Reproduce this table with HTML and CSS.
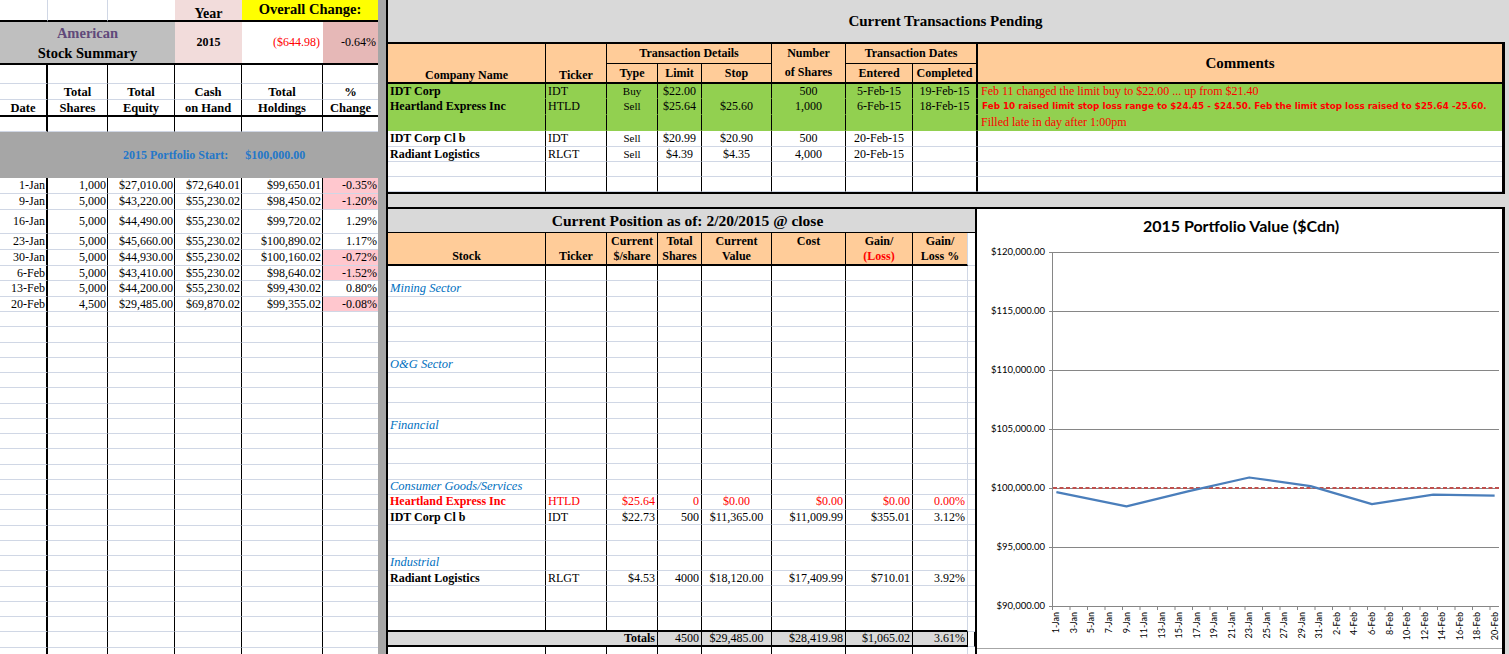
FILE: index.html
```html
<!DOCTYPE html>
<html>
<head>
<meta charset="utf-8">
<title>Stock Summary</title>
<link rel="stylesheet" href="styles.css">
</head>
<body>
<div class="sheet">
  <section class="summary">
    <table class="sum">
      <colgroup><col class="w48"><col class="w60"><col class="w67"><col class="w67"><col class="w81"><col class="w55"></colgroup>
      <tr class="r1"><td class="gl"></td><td class="gl"></td><td></td><td class="year">Year</td><td class="overall" colspan="2">Overall Change:</td></tr>
      <tr class="r2"><td class="stitle" colspan="3"><div class="amer">American</div><div class="ss">Stock Summary</div></td><td class="yr">2015</td><td class="chg">($644.98)</td><td class="chgp">-0.64%</td></tr>
      <tr class="b r3"><td class="v1"></td><td class="v2"></td><td class="v2"></td><td class="v2"></td><td class="v2"></td><td></td></tr>
      <tr class="b r4 hd"><td class="v1"></td><td class="v2">Total</td><td class="v2">Total</td><td class="v2">Cash</td><td class="v2">Total</td><td>%</td></tr>
      <tr class="b r5 hd thick"><td class="v1">Date</td><td class="v2">Shares</td><td class="v2">Equity</td><td class="v2">on Hand</td><td class="v2">Holdings</td><td>Change</td></tr>
      <tr class="b r6"><td class="v1"></td><td class="v2"></td><td class="v2"></td><td class="v2"></td><td class="v2"></td><td></td></tr>
      <tr class="r7"><td class="start" colspan="6"><span class="st1">2015 Portfolio Start:</span><span>$100,000.00</span></td></tr>
      <tr class="b dt h16"><td class="v1">1-Jan</td><td class="v2">1,000</td><td class="v2">$27,010.00</td><td class="v2">$72,640.01</td><td class="v2">$99,650.01</td><td class="neg">-0.35%</td></tr>
      <tr class="b dt h16"><td class="v1">9-Jan</td><td class="v2">5,000</td><td class="v2">$43,220.00</td><td class="v2">$55,230.02</td><td class="v2">$98,450.02</td><td class="neg">-1.20%</td></tr>
      <tr class="b dt h24"><td class="v1">16-Jan</td><td class="v2">5,000</td><td class="v2">$44,490.00</td><td class="v2">$55,230.02</td><td class="v2">$99,720.02</td><td>1.29%</td></tr>
      <tr class="b dt h16"><td class="v1">23-Jan</td><td class="v2">5,000</td><td class="v2">$45,660.00</td><td class="v2">$55,230.02</td><td class="v2">$100,890.02</td><td>1.17%</td></tr>
      <tr class="b dt h16"><td class="v1">30-Jan</td><td class="v2">5,000</td><td class="v2">$44,930.00</td><td class="v2">$55,230.02</td><td class="v2">$100,160.02</td><td class="neg">-0.72%</td></tr>
      <tr class="b dt h15"><td class="v1">6-Feb</td><td class="v2">5,000</td><td class="v2">$43,410.00</td><td class="v2">$55,230.02</td><td class="v2">$98,640.02</td><td class="neg">-1.52%</td></tr>
      <tr class="b dt h16"><td class="v1">13-Feb</td><td class="v2">5,000</td><td class="v2">$44,200.00</td><td class="v2">$55,230.02</td><td class="v2">$99,430.02</td><td>0.80%</td></tr>
      <tr class="b dt h15"><td class="v1">20-Feb</td><td class="v2">4,500</td><td class="v2">$29,485.00</td><td class="v2">$69,870.02</td><td class="v2">$99,355.02</td><td class="neg">-0.08%</td></tr>
      <tr class="b e"><td class="v1"></td><td class="v2"></td><td class="v2"></td><td class="v2"></td><td class="v2"></td><td></td></tr>
      <tr class="b e"><td class="v1"></td><td class="v2"></td><td class="v2"></td><td class="v2"></td><td class="v2"></td><td></td></tr>
      <tr class="b e"><td class="v1"></td><td class="v2"></td><td class="v2"></td><td class="v2"></td><td class="v2"></td><td></td></tr>
      <tr class="b e"><td class="v1"></td><td class="v2"></td><td class="v2"></td><td class="v2"></td><td class="v2"></td><td></td></tr>
      <tr class="b e"><td class="v1"></td><td class="v2"></td><td class="v2"></td><td class="v2"></td><td class="v2"></td><td></td></tr>
      <tr class="b e"><td class="v1"></td><td class="v2"></td><td class="v2"></td><td class="v2"></td><td class="v2"></td><td></td></tr>
      <tr class="b e"><td class="v1"></td><td class="v2"></td><td class="v2"></td><td class="v2"></td><td class="v2"></td><td></td></tr>
      <tr class="b e"><td class="v1"></td><td class="v2"></td><td class="v2"></td><td class="v2"></td><td class="v2"></td><td></td></tr>
      <tr class="b e"><td class="v1"></td><td class="v2"></td><td class="v2"></td><td class="v2"></td><td class="v2"></td><td></td></tr>
      <tr class="b e"><td class="v1"></td><td class="v2"></td><td class="v2"></td><td class="v2"></td><td class="v2"></td><td></td></tr>
      <tr class="b e"><td class="v1"></td><td class="v2"></td><td class="v2"></td><td class="v2"></td><td class="v2"></td><td></td></tr>
      <tr class="b e"><td class="v1"></td><td class="v2"></td><td class="v2"></td><td class="v2"></td><td class="v2"></td><td></td></tr>
      <tr class="b e"><td class="v1"></td><td class="v2"></td><td class="v2"></td><td class="v2"></td><td class="v2"></td><td></td></tr>
      <tr class="b e"><td class="v1"></td><td class="v2"></td><td class="v2"></td><td class="v2"></td><td class="v2"></td><td></td></tr>
      <tr class="b e"><td class="v1"></td><td class="v2"></td><td class="v2"></td><td class="v2"></td><td class="v2"></td><td></td></tr>
      <tr class="b e"><td class="v1"></td><td class="v2"></td><td class="v2"></td><td class="v2"></td><td class="v2"></td><td></td></tr>
      <tr class="b e"><td class="v1"></td><td class="v2"></td><td class="v2"></td><td class="v2"></td><td class="v2"></td><td></td></tr>
      <tr class="b e"><td class="v1"></td><td class="v2"></td><td class="v2"></td><td class="v2"></td><td class="v2"></td><td></td></tr>
      <tr class="b e"><td class="v1"></td><td class="v2"></td><td class="v2"></td><td class="v2"></td><td class="v2"></td><td></td></tr>
      <tr class="b e"><td class="v1"></td><td class="v2"></td><td class="v2"></td><td class="v2"></td><td class="v2"></td><td></td></tr>
      <tr class="b e"><td class="v1"></td><td class="v2"></td><td class="v2"></td><td class="v2"></td><td class="v2"></td><td></td></tr>
      <tr class="b e"><td class="v1"></td><td class="v2"></td><td class="v2"></td><td class="v2"></td><td class="v2"></td><td></td></tr>
      <tr class="b e"><td class="v1"></td><td class="v2"></td><td class="v2"></td><td class="v2"></td><td class="v2"></td><td></td></tr>
    </table>
  </section>
  <div class="divider"></div>
  <div class="main">
    <div class="ptitle">Current Transactions Pending</div>
    <div class="pend-wrap">
      <table class="pend">
        <colgroup><col class="w158"><col class="w61"><col class="w51"><col class="w44"><col class="w70"><col class="w74"><col class="w67"><col class="w64"><col class="w525"></colgroup>
        <tr class="ha">
          <td rowspan="2" class="hbot">Company Name</td>
          <td rowspan="2" class="hbot">Ticker</td>
          <td colspan="3" class="sub">Transaction Details</td>
          <td rowspan="2" class="hnum">Number<br>of Shares</td>
          <td colspan="2" class="sub">Transaction Dates</td>
          <td rowspan="2" class="c hcmt">Comments</td>
        </tr>
        <tr class="hb"><td>Type</td><td>Limit</td><td>Stop</td><td>Entered</td><td>Completed</td></tr>
        <tr class="gr h15"><td class="co">IDT Corp</td><td>IDT</td><td class="ty">Buy</td><td class="ce">$22.00</td><td class="ce"></td><td class="ce">500</td><td class="ce">5-Feb-15</td><td class="ce">19-Feb-15</td><td class="c cm1">Feb 11 changed the limit buy to $22.00 ... up from $21.40</td></tr>
        <tr class="gr h16"><td class="co">Heartland Express Inc</td><td>HTLD</td><td class="ty">Sell</td><td class="ce">$25.64</td><td class="ce">$25.60</td><td class="ce">1,000</td><td class="ce">6-Feb-15</td><td class="ce">18-Feb-15</td><td class="c cm2">Feb 10 raised limit stop loss range to $24.45 - $24.50. Feb the limit stop loss raised to $25.64 -25.60.</td></tr>
        <tr class="gr h16"><td></td><td></td><td></td><td></td><td></td><td></td><td></td><td></td><td class="c cm1">Filled late in day after 1:00pm</td></tr>
        <tr class="h16"><td class="co">IDT Corp Cl b</td><td>IDT</td><td class="ty">Sell</td><td class="ce">$20.99</td><td class="ce">$20.90</td><td class="ce">500</td><td class="ce">20-Feb-15</td><td></td><td class="c"></td></tr>
        <tr class="h15"><td class="co">Radiant Logistics</td><td>RLGT</td><td class="ty">Sell</td><td class="ce">$4.39</td><td class="ce">$4.35</td><td class="ce">4,000</td><td class="ce">20-Feb-15</td><td></td><td class="c"></td></tr>
        <tr class="h15"><td></td><td></td><td></td><td></td><td></td><td></td><td></td><td></td><td class="c"></td></tr>
        <tr class="h15"><td></td><td></td><td></td><td></td><td></td><td></td><td></td><td></td><td class="c"></td></tr>
      </table>
    </div>
    <div class="strip"></div>
    <div class="lower">
      <div class="pos-wrap">
        <table class="pos">
          <colgroup><col class="w158"><col class="w61"><col class="w51"><col class="w44"><col class="w70"><col class="w74"><col class="w67"><col class="w55"><col class="w7"></colgroup>
          <tr class="pt"><td colspan="9">Current Position as of: 2/20/2015 @ close</td></tr>
          <tr class="ph"><td>Stock</td><td>Ticker</td><td>Current<br>$/share</td><td>Total<br>Shares</td><td>Current<br>Value</td><td class="htop">Cost</td><td>Gain/<br><span class="red">(Loss)</span></td><td>Gain/<br>Loss %</td><td class="blank"></td></tr>
          <tr><td></td><td></td><td></td><td></td><td></td><td></td><td></td><td></td><td></td></tr>
          <tr><td class="sec">Mining Sector</td><td></td><td></td><td></td><td></td><td></td><td></td><td></td><td></td></tr>
          <tr><td></td><td></td><td></td><td></td><td></td><td></td><td></td><td></td><td></td></tr>
          <tr><td></td><td></td><td></td><td></td><td></td><td></td><td></td><td></td><td></td></tr>
          <tr><td></td><td></td><td></td><td></td><td></td><td></td><td></td><td></td><td></td></tr>
          <tr><td></td><td></td><td></td><td></td><td></td><td></td><td></td><td></td><td></td></tr>
          <tr><td class="sec">O&amp;G Sector</td><td></td><td></td><td></td><td></td><td></td><td></td><td></td><td></td></tr>
          <tr><td></td><td></td><td></td><td></td><td></td><td></td><td></td><td></td><td></td></tr>
          <tr><td></td><td></td><td></td><td></td><td></td><td></td><td></td><td></td><td></td></tr>
          <tr><td></td><td></td><td></td><td></td><td></td><td></td><td></td><td></td><td></td></tr>
          <tr><td class="sec">Financial</td><td></td><td></td><td></td><td></td><td></td><td></td><td></td><td></td></tr>
          <tr><td></td><td></td><td></td><td></td><td></td><td></td><td></td><td></td><td></td></tr>
          <tr><td></td><td></td><td></td><td></td><td></td><td></td><td></td><td></td><td></td></tr>
          <tr><td></td><td></td><td></td><td></td><td></td><td></td><td></td><td></td><td></td></tr>
          <tr><td class="sec">Consumer Goods/Services</td><td></td><td></td><td></td><td></td><td></td><td></td><td></td><td></td></tr>
          <tr class="redrow"><td class="co">Heartland Express Inc</td><td>HTLD</td><td class="r">$25.64</td><td class="r">0</td><td class="ce">$0.00</td><td class="r">$0.00</td><td class="r">$0.00</td><td class="r">0.00%</td><td></td></tr>
          <tr><td class="co">IDT Corp Cl b</td><td>IDT</td><td class="r">$22.73</td><td class="r">500</td><td class="ce">$11,365.00</td><td class="r">$11,009.99</td><td class="r">$355.01</td><td class="r">3.12%</td><td></td></tr>
          <tr><td></td><td></td><td></td><td></td><td></td><td></td><td></td><td></td><td></td></tr>
          <tr><td></td><td></td><td></td><td></td><td></td><td></td><td></td><td></td><td></td></tr>
          <tr><td class="sec">Industrial</td><td></td><td></td><td></td><td></td><td></td><td></td><td></td><td></td></tr>
          <tr><td class="co">Radiant Logistics</td><td>RLGT</td><td class="r">$4.53</td><td class="r">4000</td><td class="ce">$18,120.00</td><td class="r">$17,409.99</td><td class="r">$710.01</td><td class="r">3.92%</td><td></td></tr>
          <tr><td></td><td></td><td></td><td></td><td></td><td></td><td></td><td></td><td></td></tr>
          <tr><td></td><td></td><td></td><td></td><td></td><td></td><td></td><td></td><td></td></tr>
          <tr class="pre"><td></td><td></td><td></td><td></td><td></td><td></td><td></td><td></td><td></td></tr>
          <tr class="tot"><td colspan="3" class="r tl">Totals</td><td class="r">4500</td><td class="ce">$29,485.00</td><td class="r">$28,419.98</td><td class="r">$1,065.02</td><td class="r">3.61%</td><td class="blank"></td></tr>
          <tr><td></td><td></td><td></td><td></td><td></td><td></td><td></td><td></td><td></td></tr>
        </table>
      </div>
      <div class="chart">
        <svg class="chart-svg" width="525" height="439" viewBox="0 0 525 439">
          <text class="ct" x="264" y="23" text-anchor="middle">2015 Portfolio Value ($Cdn)</text>
          <g class="grid">
            <path d="M72 43.5H522M72 102.5H522M72 161.5H522M72 220.5H522M72 279.5H522M72 338.5H522M72 397.5H522M75.5 43V401"/>
            <path d="M75.5 397v4M93 397v4M110.5 397v4M128 397v4M145.5 397v4M163 397v4M180.5 397v4M198 397v4M215.5 397v4M233 397v4M250.5 397v4M268 397v4M285.5 397v4M303 397v4M320.5 397v4M338 397v4M355.5 397v4M373 397v4M390.5 397v4M408 397v4M425.5 397v4M443 397v4M460.5 397v4M478 397v4M495.5 397v4M513 397v4"/>
          </g>
          <g class="yl">
            <text x="68" y="46">$120,000.00</text>
            <text x="68" y="105">$115,000.00</text>
            <text x="68" y="164">$110,000.00</text>
            <text x="68" y="223">$105,000.00</text>
            <text x="68" y="282">$100,000.00</text>
            <text x="68" y="341">$95,000.00</text>
            <text x="68" y="400">$90,000.00</text>
          </g>
          <line class="base" x1="76" y1="279" x2="522" y2="279"/>
          <polyline class="val" points="79.38,283.13 149.5,297.29 210.86,282.3 272.21,268.5 333.57,277.11 394.92,295.05 456.28,285.73 517.63,286.61"/>
          <g class="xl">
            <text transform="translate(79.4 403) rotate(-90)" dy="3">1-Jan</text>
            <text transform="translate(96.9 403) rotate(-90)" dy="3">3-Jan</text>
            <text transform="translate(114.4 403) rotate(-90)" dy="3">5-Jan</text>
            <text transform="translate(132 403) rotate(-90)" dy="3">7-Jan</text>
            <text transform="translate(149.5 403) rotate(-90)" dy="3">9-Jan</text>
            <text transform="translate(167 403) rotate(-90)" dy="3">11-Jan</text>
            <text transform="translate(184.6 403) rotate(-90)" dy="3">13-Jan</text>
            <text transform="translate(202.1 403) rotate(-90)" dy="3">15-Jan</text>
            <text transform="translate(219.6 403) rotate(-90)" dy="3">17-Jan</text>
            <text transform="translate(237.2 403) rotate(-90)" dy="3">19-Jan</text>
            <text transform="translate(254.7 403) rotate(-90)" dy="3">21-Jan</text>
            <text transform="translate(272.2 403) rotate(-90)" dy="3">23-Jan</text>
            <text transform="translate(289.7 403) rotate(-90)" dy="3">25-Jan</text>
            <text transform="translate(307.3 403) rotate(-90)" dy="3">27-Jan</text>
            <text transform="translate(324.8 403) rotate(-90)" dy="3">29-Jan</text>
            <text transform="translate(342.3 403) rotate(-90)" dy="3">31-Jan</text>
            <text transform="translate(359.9 403) rotate(-90)" dy="3">2-Feb</text>
            <text transform="translate(377.4 403) rotate(-90)" dy="3">4-Feb</text>
            <text transform="translate(394.9 403) rotate(-90)" dy="3">6-Feb</text>
            <text transform="translate(412.5 403) rotate(-90)" dy="3">8-Feb</text>
            <text transform="translate(430 403) rotate(-90)" dy="3">10-Feb</text>
            <text transform="translate(447.5 403) rotate(-90)" dy="3">12-Feb</text>
            <text transform="translate(465 403) rotate(-90)" dy="3">14-Feb</text>
            <text transform="translate(482.6 403) rotate(-90)" dy="3">16-Feb</text>
            <text transform="translate(500.1 403) rotate(-90)" dy="3">18-Feb</text>
            <text transform="translate(517.6 403) rotate(-90)" dy="3">20-Feb</text>
          </g>
        </svg>
      </div>
    </div>
  </div>
</div>
</body>
</html>
```
FILE: styles.css
```css
* { box-sizing: border-box; }
html, body { margin: 0; padding: 0; }
body {
  width: 1509px;
  height: 654px;
  overflow: hidden;
  background: #fff;
  font-family: "Liberation Serif", "Times New Roman", serif;
  font-size: 12px;
  color: #000;
}
.sheet { display: flex; width: 1509px; height: 654px; overflow: hidden; }

/* column widths */
.w7 { width: 7px; } .w44 { width: 44px; } .w48 { width: 48px; } .w51 { width: 51px; }
.w55 { width: 55px; } .w60 { width: 60px; } .w61 { width: 61px; } .w64 { width: 64px; }
.w67 { width: 67px; } .w70 { width: 70px; } .w74 { width: 74px; } .w81 { width: 81px; }
.w158 { width: 158px; } .w525 { width: 525px; }

table { border-collapse: separate; border-spacing: 0; table-layout: fixed; empty-cells: show; }
td { padding: 0 2px; white-space: nowrap; overflow: hidden; line-height: 13px; vertical-align: middle; }

/* ---------- left summary ---------- */
.summary {
  width: 378px;
  flex: none;
  background:
    linear-gradient(#000, #000) 46px 64px / 2px 100% no-repeat,
    linear-gradient(#000, #000) 107px 64px / 1px 100% no-repeat,
    linear-gradient(#000, #000) 174px 64px / 1px 100% no-repeat,
    linear-gradient(#000, #000) 241px 64px / 1px 100% no-repeat,
    linear-gradient(#000, #000) 322px 64px / 1px 100% no-repeat,
    #fff;
}
.sum { width: 378px; }
.sum td { border-bottom: 1px solid #D0D7E5; }
.sum td.v1 { border-right: 2px solid #000; }
.sum td.v2 { border-right: 1px solid #000; }
.sum .r1 { height: 22px; }
.sum .r1 td { border-bottom: 2px solid #000; }
.sum .r1 td.gl { border-right: 1px solid #D0D7E5; }
.sum .year { background: #F2DCDB; font-weight: bold; font-size: 14px; text-align: center; vertical-align: bottom; }
.sum .overall { background: #FFFF00; font-weight: bold; font-size: 14.5px; text-align: center; vertical-align: top; padding-top: 3px; }
.sum .r2 { height: 42px; }
.sum .r2 td { border-bottom: 2px solid #000; }
.sum .stitle { background: #BFBFBF; text-align: center; font-weight: bold; font-size: 14.5px; line-height: 20px; padding-top: 1px; }
.sum .amer { color: #60497A; }
.sum .yr { background: #F2DCDB; font-weight: bold; text-align: center; }
.sum .chg { color: #FF0000; text-align: right; padding-right: 3px; }
.sum .chgp { background: #E6B8B7; text-align: right; padding-right: 2px; }
.sum .r3 { height: 19px; }
.sum .r4 { height: 16px; }
.sum .r5 { height: 17px; }
.sum .r6 { height: 15px; }
.sum .hd td { font-weight: bold; text-align: center; font-size: 12.5px; vertical-align: bottom; line-height: 14px; }
.sum tr.thick td { border-bottom: 2px solid #000; }
.sum .r7 { height: 46px; }
.sum .start { background: #A6A6A6; color: #2477C9; font-weight: bold; padding-left: 123px; border-bottom: 0; }
.sum .st1 { margin-right: 17px; }
.sum .dt td { text-align: right; padding: 0 1px 0 0; }
.sum .dt td.neg { background: #FFC7CE; }
.sum .h15 { height: 15px; }
.sum .h16 { height: 16px; }
.sum .h24 { height: 24px; }
.sum .e { height: 15.25px; }

/* ---------- divider ---------- */
.divider { width: 10px; flex: none; background: #A6A6A6; border-right: 2px solid #000; }

/* ---------- main ---------- */
.main { flex: 1; background: #D9D9D9; display: flex; flex-direction: column; min-width: 0; }
.ptitle {
  height: 42px;
  flex: none;
  font-weight: bold;
  font-size: 15px;
  line-height: 42px;
  text-align: center;
  padding-right: 6px;
}
.pend-wrap {
  width: 1117px;
  flex: none;
  background: #fff;
  border-top: 2px solid #000;
  border-right: 3px solid #000;
  border-bottom: 2px solid #000;
}
.pend { width: 1114px; }
.pend td { border-right: 1px solid #000; border-bottom: 1px solid #D0D7E5; }
.pend td.c { border-right: 0; border-left: 1px solid #000; }
.pend .ha { height: 20px; }
.pend .hb { height: 20px; }
.pend .ha td, .pend .hb td { background: #FFCC99; font-weight: bold; text-align: center; }
.pend .ha td.sub { border-bottom: 1px solid #000; }
.pend .hb td, .pend .ha td.hbot, .pend .ha td.hnum, .pend .ha td.hcmt { border-bottom: 2px solid #000; }
.pend td.hbot { vertical-align: bottom; line-height: 14px; }
.pend td.hnum { line-height: 19px; }
.pend td.hcmt { font-size: 15px; }
.pend .gr td { background: #92D050; border-bottom-color: #92D050; }
.pend .h15 { height: 15px; }
.pend .h16 { height: 16px; }
.pend .co { font-weight: bold; }
.pend .ty { text-align: center; font-size: 11px; }
.pend .ce { text-align: center; }
.pend .cm1 { color: #FF0000; padding-left: 3px; overflow: visible; }
.pend .cm2 { color: #FF0000; padding-left: 4px; font-family: "DejaVu Sans", sans-serif; font-weight: bold; font-size: 8.8px; overflow: visible; }

.strip { height: 13px; flex: none; }

.lower {
  width: 1117px;
  flex: 1;
  display: flex;
  background: #fff;
  border-top: 2px solid #000;
  border-right: 3px solid #000;
}
.pos-wrap { width: 589px; flex: none; border-right: 2px solid #000; }
.pos { width: 587px; }
.pos td { border-bottom: 1px solid #D0D7E5; border-right: 1px solid #000; }
.pos td:nth-child(8) { border-right: 1px solid #D0D7E5; }
.pos td:nth-child(9) { border-right: 0; }
.pos tr { height: 15.25px; }
.pos .pt { height: 24px; }
.pos .pt td { background: #D9D9D9; border-bottom: 1px solid #000; border-right: 0; font-weight: bold; font-size: 15.5px; text-align: center; padding-left: 14px; overflow: visible; }
.pos .ph { height: 33px; }
.pos .ph td { background: #FFCC99; font-weight: bold; text-align: center; line-height: 15px; vertical-align: bottom; border-bottom: 2px solid #000; }
.pos .ph td.blank { background: #fff; border-bottom: 1px solid #D0D7E5; }
.pos .ph td.htop { vertical-align: top; padding-top: 1px; }
.pos .red { color: #FF0000; }
.pos .sec { color: #0070C0; font-style: italic; font-size: 12.5px; overflow: visible; }
.pos .co { font-weight: bold; }
.pos .r { text-align: right; }
.pos .ce { text-align: center; }
.pos .redrow td { color: #FF0000; }
.pos tr.pre td { border-bottom: 2px solid #000; }
.pos tr.pre td:nth-child(9) { border-bottom: 1px solid #D0D7E5; }
.pos .tot td { background: #D9D9D9; border-bottom: 2px solid #000; }
.pos .tot td.tl { font-weight: bold; border-right: 1px solid #000; }
.pos .tot td.blank { background: #fff; border-bottom: 1px solid #D0D7E5; }

/* ---------- chart ---------- */
.chart { width: 525px; height: 440px; flex: none; border-bottom: 1px solid #A6A6A6; background: #fff; }
.chart-svg { display: block; }
.ct { font-family: Lato, "Open Sans", sans-serif; font-weight: bold; font-size: 16px; fill: #000; }
.grid path { stroke: #868686; stroke-width: 1; fill: none; }
.yl text { font-family: Lato, "Open Sans", sans-serif; font-size: 9.5px; fill: #000; text-anchor: end; }
.xl text { font-family: Lato, "Open Sans", sans-serif; font-size: 9px; fill: #000; text-anchor: end; }
.base { stroke: #C0504D; stroke-width: 2; stroke-dasharray: 4 2.5; }
.val { stroke: #4A7EBB; stroke-width: 2.25; fill: none; stroke-linejoin: round; }
```
